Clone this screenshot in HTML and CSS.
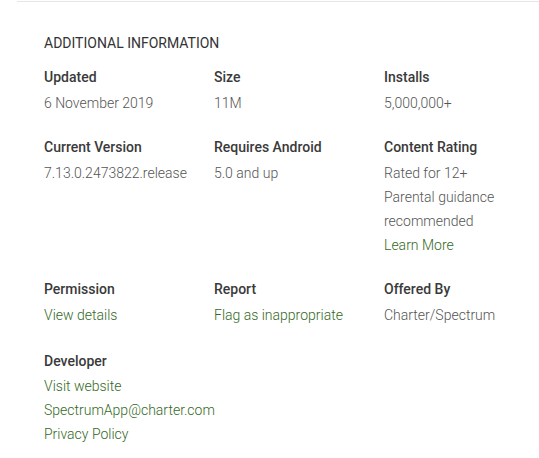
FILE: index.html
```html
<!DOCTYPE html>
<html>
<head>
<meta charset="utf-8">
<link rel="stylesheet" href="styles.css">
</head>
<body>
<section class="info">
  <h2 class="title">ADDITIONAL INFORMATION</h2>
  <div class="grid">
    <div class="item"><div class="label">Updated</div><div class="value">6 November 2019</div></div>
    <div class="item"><div class="label">Size</div><div class="value">11M</div></div>
    <div class="item"><div class="label">Installs</div><div class="value">5,000,000+</div></div>
    <div class="item"><div class="label">Current Version</div><div class="value">7.13.0.2473822.release</div></div>
    <div class="item"><div class="label">Requires Android</div><div class="value">5.0 and up</div></div>
    <div class="item"><div class="label">Content Rating</div><div class="value">Rated for 12+</div><div class="value">Parental guidance recommended</div><div class="value"><a class="link" href="#">Learn More</a></div></div>
    <div class="item"><div class="label">Permission</div><div class="value"><a class="link" href="#">View details</a></div></div>
    <div class="item"><div class="label">Report</div><div class="value"><a class="link" href="#">Flag as inappropriate</a></div></div>
    <div class="item"><div class="label">Offered By</div><div class="value">Charter/Spectrum</div></div>
    <div class="item developer"><div class="label dev-label">Developer</div><div class="value"><a class="link" href="#">Visit website</a></div><div class="value"><a class="link" href="#">SpectrumApp@charter.com</a></div><div class="value"><a class="link" href="#">Privacy Policy</a></div></div>
  </div>
</section>
</body>
</html>
```
FILE: styles.css
```css
html, body {
  margin: 0;
  padding: 0;
  background: #fff;
}
body {
  font-family: Roboto, "Liberation Sans", sans-serif;
  font-size: 14px;
  line-height: 24px;
  color: #333;
}
.info {
  margin: 1px 0 0 17px;
  border-top: 1px solid #e6e6e6;
  padding: 29px 0 0 27px;
}
.title {
  margin: 0 0 10px;
  font-size: 14px;
  font-weight: 400;
  line-height: 24px;
  color: #333;
}
.grid {
  display: grid;
  grid-template-columns: 170px 170px 170px;
  row-gap: 20px;
}
.label {
  font-weight: 500;
  color: #3a3a3a;
  margin-bottom: 2px;
}
.value {
  font-weight: 300;
  color: #555;
  max-width: 150px;
}
.developer {
  margin-top: 2px;
}
.dev-label {
  margin-bottom: 1px;
}
.link {
  color: #33691e;
  text-decoration: none;
}
```
